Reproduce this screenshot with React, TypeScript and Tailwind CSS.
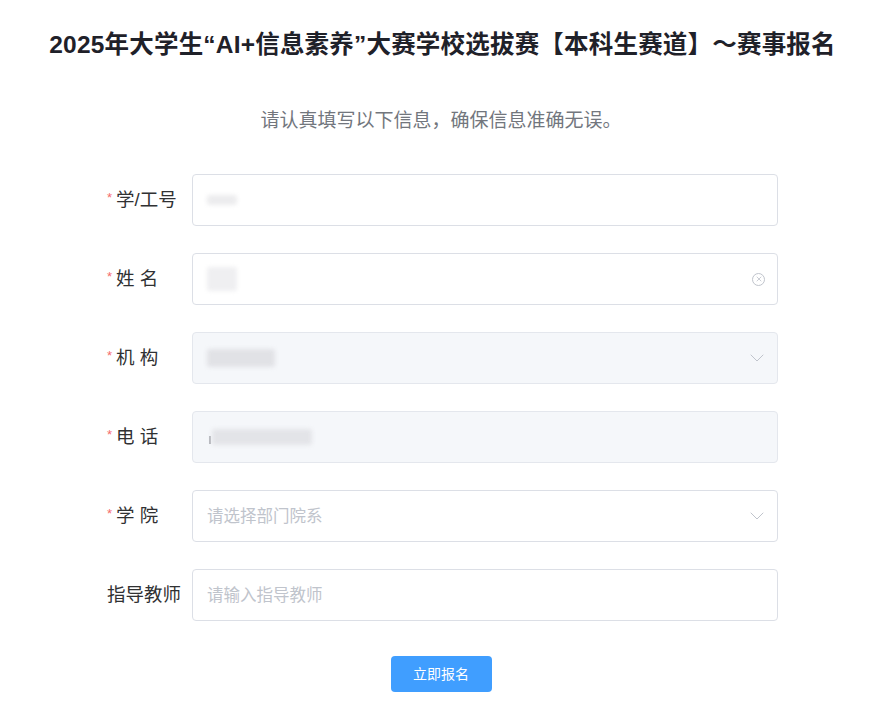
import { X, ChevronDown } from "lucide-react";

const FONT = "font-['Liberation_Sans','Noto_Sans_CJK_SC',sans-serif]";

interface RowProps {
  label: string;
  required?: boolean;
  disabled?: boolean;
  children?: React.ReactNode;
  suffix?: React.ReactNode;
}

function Row({ label, required, disabled, children, suffix }: RowProps) {
  return (
    <div className="flex items-center h-[52px] mb-[27px]">
      <div className="w-[85px] flex items-center text-[18.5px] text-[#303133]">
        {required && <span className="text-[#f56c6c] text-[13px] mr-[4px] -mt-[4px]">*</span>}
        <span className="whitespace-pre">{label}</span>
      </div>
      <div
        className={`w-[586px] h-[52px] rounded-[4px] border flex items-center pl-[14px] pr-[8px] ${
          disabled ? "bg-[#f5f7fa] border-[#e4e7ed]" : "bg-white border-[#dcdfe6]"
        }`}
      >
        <div className="flex-1 flex items-center">{children}</div>
        {suffix}
      </div>
    </div>
  );
}

// 模糊处理的已填内容
function Blur({ w, h, tone = "bg-[#e6e7eb]" }: { w: string; h: string; tone?: string }) {
  return <div className={`${w} ${h} ${tone} rounded-[3px] blur-[2px]`} />;
}

const Chevron = () => <ChevronDown className="w-[24px] h-[24px] text-[#c0c4cc]" strokeWidth={1} />;

export default function App() {
  return (
    <div className={`min-h-screen bg-white ${FONT}`}>
      <h1 className="pt-[30px] pr-[7px] text-center text-[24.5px] leading-[30px] font-bold text-[#1f2129] tracking-[0.2px]">
        2025年大学生“AI+信息素养”大赛学校选拔赛【本科生赛道】～赛事报名
      </h1>
      <p className="mt-[49px] text-center text-[19px] leading-[24px] text-[#72767d] pr-[10px]">
        请认真填写以下信息，确保信息准确无误。
      </p>

      <div className="mt-[41px] ml-[107px]">
        <Row label="学/工号" required>
          <Blur w="w-[30px]" h="h-[10px]" tone="bg-[#ececee]" />
        </Row>
        <Row
          label="姓 名"
          required
          suffix={
            <span className="w-[13px] h-[13px] mr-[4px] rounded-full border border-[#c0c4cc] flex items-center justify-center">
              <X className="w-[8px] h-[8px] text-[#c0c4cc]" strokeWidth={2.5} />
            </span>
          }
        >
          <Blur w="w-[30px]" h="h-[24px]" tone="bg-[#efeff1]" />
        </Row>
        <Row label="机 构" required disabled suffix={<Chevron />}>
          <Blur w="w-[68px]" h="h-[18px]" tone="bg-[#e1e2e6]" />
        </Row>
        <Row label="电 话" required disabled>
          <div className="ml-[2px] flex items-center gap-[1px]">
            <div className="w-[2px] h-[8px] bg-[#b5b7bc] mt-[6px]" />
            <Blur w="w-[100px]" h="h-[16px]" tone="bg-[#e3e4e8]" />
          </div>
        </Row>
        <Row label="学 院" required suffix={<Chevron />}>
          <span className="text-[16.5px] text-[#c0c4cc]">请选择部门院系</span>
        </Row>
        <Row label="指导教师">
          <span className="text-[16.5px] text-[#c0c4cc]">请输入指导教师</span>
        </Row>
      </div>

      <div className="mt-[8px] pt-[8px] flex justify-center pr-[10px]">
        <button className="w-[101px] h-[36px] rounded-[4px] bg-[#409eff] text-white text-[14px]">立即报名</button>
      </div>
    </div>
  );
}
